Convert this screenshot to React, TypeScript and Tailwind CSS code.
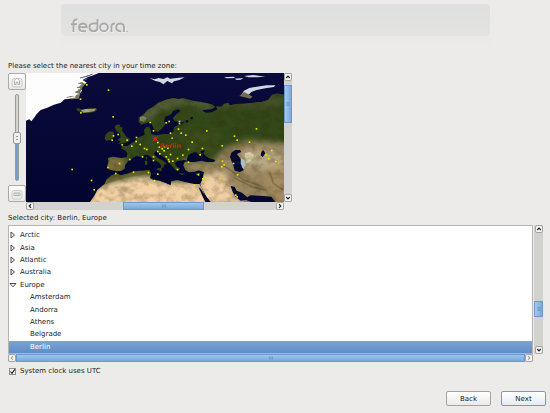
import { useState } from 'react';

const regions = ['Arctic', 'Asia', 'Atlantic', 'Australia'];
const cities = ['Amsterdam', 'Andorra', 'Athens', 'Belgrade', 'Berlin'];

// city markers on the map, in map units
const markers = [
    [-10, -16], [-29, 27], [-28, 68], [69, 80], [55, 0], [180, 97], [190, 122], [228, 98],
    [237, 94], [268, 94], [268, 100], [265, 117], [273, 129], [287, 135], [241, 129], [350, 122],
    [433, 138], [441, 150], [499, 116], [478, 156], [396, 167], [306, 156], [84, 133], [70, 137],
    [66, 150], [111, 150], [125, 168], [139, 142], [138, 154], [150, 163], [163, 175], [170, 178],
    [96, 164], [203, 157], [208, 171], [216, 176], [222, 182], [233, 174], [203, 184], [209, 191],
    [190, 200], [190, 211], [157, 200], [119, 208], [88, 220], [53, 232], [77, 250], [130, 246],
    [175, 247], [203, 252], [228, 200], [235, 208], [237, 214], [248, 213], [241, 193], [262, 205],
    [262, 238], [278, 195], [295, 178], [295, 216], [337, 175], [330, 194], [397, 213], [402, 224],
    [430, 220], [395, 230], [442, 254], [478, 198], [528, 194], [536, 206], [557, 214], [325, 254],
    [338, 266], [340, 275], [313, 285], [345, 262], [390, 265], [437, 315], [441, 320], [4, 271],
    [12, 299], [-54, 238], [225, 170], [545, 181], [193, 271],
];

const mainland =
    'M146 82 160 74 172 60 190 50 205 38 228 29 250 24 264 27 280 25 300 30 312 33 335 36 352 40 368 44 376 51 364 58 344 59 336 62 348 68 366 67 382 58 378 49 394 50 402 42 414 38 420 46 440 42 462 41 490 38 515 36 534 30 546 14 562 10 582 14 V336 H356 L345 312 334 290 331 282 338 266 342 246 326 241 312 246 298 247 286 240 280 226 284 216 300 213 282 210 264 213 254 219 262 232 270 236 264 243 256 240 246 228 236 217 228 206 214 196 204 186 196 184 192 192 204 204 220 212 232 224 224 222 220 232 212 236 214 226 204 216 188 206 176 196 166 194 152 200 140 198 128 204 116 212 106 224 104 236 94 242 82 244 72 242 56 238 52 228 56 214 54 204 68 200 94 204 110 202 112 190 104 180 94 176 96 168 112 168 124 160 134 154 142 144 156 138 164 134 162 120 168 112 178 110 182 120 184 132 200 136 222 132 240 132 250 126 252 112 266 104 284 98 272 96 254 94 248 84 260 72 272 62 264 58 250 62 242 74 226 80 222 92 226 104 214 118 202 126 194 122 186 104 180 94 168 100 154 104 146 96 Z';
const africa =
    'M0 336 L14 316 22 300 34 290 44 282 50 268 64 256 76 251 94 256 110 252 136 243 160 242 178 240 184 250 180 264 190 270 208 272 228 280 242 286 244 274 262 270 284 276 312 282 328 282 334 292 342 310 352 336 Z';
const islands = [
    'M74 110 80 104 92 104 88 112 98 112 96 122 104 132 110 142 120 146 118 154 102 160 84 162 92 154 82 150 92 142 90 130 80 124 76 118Z',
    'M48 132 58 124 72 126 72 140 64 150 48 152 44 146Z',
    'M-42 56 -32 54 -28 60 -16 58 0 54 18 54 22 60 12 66 -6 70 -24 68 -38 62Z',
    'M202 234 216 234 214 244 202 240Z',
    'M164 212 172 212 172 224 166 226Z',
    'M167 201 171 200 171 209 168 208Z',
    'M266 250 284 251 276 255Z',
    'M316 252 330 248 324 256Z',
];
const waters = [
    'M292 204 296 194 308 188 318 186 326 194 340 190 344 196 356 204 376 210 372 216 350 216 334 212 314 216 298 216 290 212Z',
    'M332 184 344 180 342 188 334 190Z',
    'M424 188 436 180 450 180 454 186 440 192 452 206 460 214 462 226 454 230 462 240 450 246 434 242 430 226 424 212 420 200Z',
    'M514 186 520 180 526 190 518 202 512 196Z',
    'M422 288 434 290 440 302 456 308 472 322 482 316 520 318 544 320 556 336 484 336 468 330 452 332 438 322 428 306Z',
    'M326 292 332 296 346 316 362 336 346 336 336 316Z',
    'M286 92 294 90 296 95 288 98Z',
    'M302 82 308 80 308 88 302 88Z',
];
const greenland =
    'M-192 -51 H26 L10 -44 -4 -40 -12 -36 -22 -30 -10 -22 -20 -14 -30 -8 -24 2 -32 12 -36 22 -58 26 -76 28 -88 38 -108 44 -130 54 -148 60 -160 72 -168 84 -176 94 -182 88 -192 92 Z';
const ice = [
    'M178 -36 194 -32 206 -36 220 -33 232 -38 240 -34 260 -36 284 -38 268 -30 252 -26 246 -20 232 -27 220 -17 210 -24 196 -27Z',
    'M402 -38 430 -40 436 -36 410 -35Z',
    'M434 -34 460 -36 452 -31 440 -30Z',
    'M462 -42 490 -45 510 -42 526 -40 500 -38 476 -38Z',
    'M454 14 462 2 478 -6 500 -10 530 -14 556 -14 552 -9 526 -5 500 0 484 6 474 16 460 18Z',
];

function WorldMap(){
    return (
        <svg viewBox="-192 -51 774 387" preserveAspectRatio="none" className="block w-full h-full" role="img" aria-label="Time zone map">
            <defs>
                <filter id="soft" x="-50%" y="-50%" width="200%" height="200%" colorInterpolationFilters="sRGB">
                    <feGaussianBlur stdDeviation="10"/>
                </filter>
                <filter id="terrain" x="0" y="0" width="100%" height="100%" colorInterpolationFilters="sRGB">
                    <feTurbulence type="fractalNoise" baseFrequency="0.035 0.045" numOctaves="4" seed="7"/>
                    <feColorMatrix values="0 0 0 0 0.2  0 0 0 0 0.15  0 0 0 0 0.03  2.6 0 0 0 -1.1"/>
                </filter>
                <linearGradient id="sea" x1="0" y1="0" x2="0" y2="1">
                    <stop offset="0" stopColor="#0a0a3c"/>
                    <stop offset="1" stopColor="#02052f"/>
                </linearGradient>
                <clipPath id="land">
                    <path d={mainland}/>
                    <path d={africa}/>
                    {islands.map((d) => <path key={d} d={d}/>)}
                </clipPath>
            </defs>
            <rect x="-192" y="-51" width="774" height="387" fill="url(#sea)"/>
            <g clipPath="url(#land)">
                <rect x="-60" y="0" width="642" height="336" fill="#324818"/>
                <g filter="url(#soft)">
                    <path d="M150 80 200 36 260 20 380 45 350 60 280 40 210 60 170 96Z" fill="#5c6440"/>
                    <path d="M270 120 H400 L370 200 300 190Z" fill="#3b4d1b"/>
                    <path d="M382 20 H582 V50 H382Z" fill="#47512b"/>
                    <path d="M400 178 470 152 600 160 V350 H400 L330 250 270 244 280 210 370 215Z" fill="#998760"/>
                    <path d="M450 190 520 175 590 195 580 240 470 240Z" fill="#b8a882"/>
                    <path d="M40 200 H105 V250 H50Z" fill="#857446"/>
                    <path d="M320 260 400 245 425 300 470 345 H340Z" fill="#f0cfa4"/>
                    <path d="M-20 360 20 284 160 256 240 276 340 276 360 360Z" fill="#f3d2a6"/>
                    <path d="M520 240 600 225 600 350 560 340Z" fill="#a58c60"/>
                </g>
                <path d="M36 286 60 262 80 248 140 240 180 240 172 252 110 262 60 278Z" fill="#6a5f30" opacity=".65"/>
                <path d="M150 82 160 78 170 84 162 96 150 92Z" fill="#8d917a"/>
                <path d="M-30 58 18 56 12 64 -20 68Z" fill="#a6a38d"/>
                <path d="M430 262 450 272 490 292 530 300M400 226 430 246 460 270 520 290M540 250 550 280 580 300" fill="none" stroke="#5e5030" strokeWidth="5" opacity=".45"/>
                <path d="M464 190 480 186 492 196 482 214 468 220Z" fill="#d3cbb4"/>
                <rect x="-60" y="0" width="642" height="336" filter="url(#terrain)" opacity=".28"/>
            </g>
            {waters.map((d) => <path key={d} d={d} fill="#05092f"/>)}
            <path d="M452 204 464 210 466 226 460 236 452 222Z" fill="#a9c2c0"/>
            <path d={greenland} fill="#fdfdfd"/>
            <path d="M-72 22 -58 18 -46 20 -38 12 -46 6 -34 0 -40 -8 -28 -12 -36 -20 -24 -24 -14 -18 -22 -10 -28 4 -30 16 -34 26 -56 28Z" fill="#77785f"/>
            <path d="M-66 24 -44 21M-52 10 -34 12M-50 -4 -30 -4M-46 -18 -26 -16" stroke="#fff" strokeWidth="3"/>
            <path d="M-30 -36 -6 -42 8 -48M-20 -28 -8 -34" stroke="#596382" strokeWidth="3"/>
            {ice.map((d) => <path key={d} d={d} fill="#cfd8e4"/>)}
            <path d="M448 18 462 6 474 12 488 20 480 26 464 22Z" fill="#736b4c"/>
            {markers.map(([x, y]) => (
                <rect key={`${x},${y}`} x={x - 2} y={y - 2} width="5" height="5" fill="#e8e800"/>
            ))}
            <rect x="244" y="142" width="5" height="5" fill="#f5a27a"/>
            <circle cx="196" cy="146" r="6" fill="#e01b06"/>
            <path d="M188 138 204 154M204 138 188 154" stroke="#e01b06" strokeWidth="3"/>
            <text x="209" y="174" fontSize="19" fontWeight="bold" fill="#d81c08" fontFamily="DejaVu Sans, sans-serif">Berlin</text>
        </svg>
    )
}

const rotations = { up: '', down: 'rotate-180', left: '-rotate-90', right: 'rotate-90' };

function Stepper({ dir, faded }: { dir: keyof typeof rotations; faded?: boolean }){
    return (
        <button aria-label={`Scroll ${dir}`} className="shrink-0 w-2 h-2 grid place-items-center rounded-xs border border-[#a3a39f] bg-[#f6f6f4]">
            <svg viewBox="0 0 6 6" className={`w-1.5 h-1.5 ${rotations[dir]}`}>
                <path d="M1.2 4 3 2.2 4.8 4" fill="none" stroke={faded ? '#a8a8a8' : '#222'} strokeWidth="1.2"/>
            </svg>
        </button>
    )
}

function Grip({ vertical }: { vertical?: boolean }){
    return (
        <svg viewBox="0 0 5 5" className={vertical ? 'w-1 h-1 rotate-90' : 'w-1 h-1'}>
            <path d="M.5 .5v4M2.5 .5v4M4.5 .5v4" stroke="#5f86b8" strokeWidth=".8"/>
        </svg>
    )
}

function ZoomButton({ label, out }: { label: string; out?: boolean }){
    return (
        <button aria-label={label} className="w-full h-[17px] grid place-items-center rounded-xs border border-[#aaa9a5] bg-linear-to-b from-white to-[#e8e8e5]">
            <svg viewBox="0 0 12 12" className="w-3 h-3">
                <rect x="1" y="2.5" width="10" height="8.5" rx="2" fill="#ededeb" stroke="#c4c3c0" strokeWidth=".8"/>
                {out
                    ? <path d="M3 5h6v2.6H3zM5 5v2.6M7 5v2.6" fill="#fff" stroke="#999" strokeWidth=".7"/>
                    : <path d="M3.5 8.500V4.800L6 2.200 8.500 4.800v3.700H7V6H5v2.500z" fill="#fff" stroke="#999" strokeWidth=".7"/>}
            </svg>
        </button>
    )
}

// outline of the header logo, drawn twice for the engraved look
function LogoStrokes(){
    return (
        <>
            <path d="M8.500 15.500H7.500Q4.500 15.500 4.500 18.800V28M2 20.200H8"/>
            <path d="M10.500 23.300H17.800Q17.600 19.700 14 19.500 10.200 19.700 10 23.500 10.200 27.200 14.200 27.200H17"/>
            <path d="M28.500 15V23.400Q28.300 27.200 24.500 27.200 20.600 27 20.500 23.400 20.600 19.700 24.500 19.500H28"/>
            <circle cx="35" cy="23.400" r="3.900"/>
            <path d="M42.500 28V22.500Q42.500 19.500 46 19.500"/>
            <path d="M55 28V23.400Q54.800 19.700 51.200 19.500 47.300 19.700 47.200 23.400 47.300 27 51.200 27.200H52.300"/>
            <path d="M57.500 27.700H59" strokeWidth="1"/>
        </>
    )
}

export default function App(){
    const [utc, setUtc] = useState(true);

    return (
        <main className="min-h-screen flex flex-col bg-[#ecebe9] font-['DejaVu_Sans',sans-serif] text-[7px] leading-[10px] text-[#1c1c1c]">
            <header className="h-15 pt-1 pl-[61px] pr-15">
                <div className="h-8 pl-2 rounded-sm bg-linear-to-b from-[#e0dfdf] to-[#e2e3e2]">
                    <svg viewBox="0 0 64 32" className="w-16 h-8" fill="none" role="img" aria-label="fedora">
                        <g stroke="#f3f3f3" strokeWidth="2.4" transform="translate(.4 .6)"><LogoStrokes/></g>
                        <g stroke="#a9a9a9" strokeWidth="1.900"><LogoStrokes/></g>
                    </svg>
                </div>
                <div className="h-4 bg-linear-to-b from-[#e9e9e7] to-[#ecebe9]"/>
            </header>

            <section className="pl-2 pr-[7px]">
                <p className="h-[13px] pt-px">Please select the nearest city in your time zone:</p>
                <div className="w-[284px] flex">
                    <div className="w-[18px] h-[129px] flex flex-col items-center">
                        <ZoomButton label="Zoom in"/>
                        <div className="relative grow w-full flex justify-center py-1">
                            <div className="w-1 rounded-full border border-[#9b9b9b] bg-linear-to-b from-[#d4d4d1] from-50% to-[#739fd2] to-50%"/>
                            <input
                                type="range"
                                aria-label="Map zoom"
                                defaultValue="50"
                                className="absolute inset-0 w-full h-full appearance-none bg-transparent opacity-0 [writing-mode:vertical-lr]"
                            />
                            <div className="absolute top-1/2 left-1/2 -translate-1/2 w-2 h-3 grid place-items-center rounded-xs border border-[#999] bg-[#f0f0ee] pointer-events-none">
                                <div className="w-[2px] h-1 border-y border-[#999]"/>
                            </div>
                        </div>
                        <ZoomButton label="Zoom out" out/>
                    </div>
                    <div className="grow h-[129px]">
                        <WorldMap/>
                    </div>
                    <div className="w-2 h-[129px] flex flex-col bg-[#d2d2cf]">
                        <Stepper dir="up"/>
                        <div className="h-1 shrink-0"/>
                        <div className="h-[38px] grid place-items-center border border-[#6e98ca] bg-linear-to-r from-[#a5c8ef] to-[#79a9df]"><Grip vertical/></div>
                        <div className="grow"/>
                        <Stepper dir="down"/>
                    </div>
                </div>
                <div className="w-[258px] h-2 ml-[18px] flex bg-[#d2d2cf]">
                    <Stepper dir="left"/>
                    <div className="w-[89px]"/>
                    <div className="w-[81px] grid place-items-center border border-[#6e98ca] bg-linear-to-b from-[#a0c5ed] to-[#79a7da]"><Grip/></div>
                    <div className="grow"/>
                    <Stepper dir="right"/>
                </div>
                <p className="h-[15px] pt-[3px]">Selected city: Berlin, Europe</p>

                <div className="flex gap-px">
                    <div className="grow pt-[3px] border border-[#b5b4b1] bg-white">
                        <ul className="h-31 flex flex-col">
                            {regions.map((region) => (
                                <li key={region} className="flex-1 flex items-center gap-[3px]">
                                    <svg viewBox="0 0 8 8" className="w-2 h-2">
                                        <path d="M2 1 5.500 4 2 7Z" fill="#fff" stroke="#333" strokeWidth=".9"/>
                                    </svg>
                                    {region}
                                </li>
                            ))}
                            <li className="flex-1 flex items-center gap-[3px]">
                                <svg viewBox="0 0 8 8" className="w-2 h-2">
                                    <path d="M1 2.500H7L4 5.800Z" fill="#fff" stroke="#333" strokeWidth=".9"/>
                                </svg>
                                Europe
                            </li>
                            {cities.map((city) => (
                                <li key={city} className="flex-1 pl-[21px] flex items-center last:bg-linear-to-b last:from-[#7da3d8] last:to-[#5f8dc5] last:text-white">{city}</li>
                            ))}
                        </ul>
                    </div>
                    <div className="w-[9px] flex flex-col items-center bg-[#d2d2cf]">
                        <Stepper dir="up"/>
                        <div className="grow"/>
                        <div className="w-full h-4 grid place-items-center border border-[#6e98ca] bg-linear-to-r from-[#a5c8ef] to-[#79a9df]"><Grip vertical/></div>
                        <div className="h-[29px] shrink-0"/>
                        <Stepper dir="down"/>
                    </div>
                </div>
                <div className="mr-[10px] h-2 flex bg-[#d2d2cf]">
                    <Stepper dir="left" faded/>
                    <div className="grow grid place-items-center border border-[#6e98ca] bg-linear-to-b from-[#a0c5ed] to-[#79a7da]"><Grip/></div>
                    <Stepper dir="right" faded/>
                </div>

                <label className="mt-1 pl-px h-[10px] flex items-center gap-1">
                    <input
                        type="checkbox"
                        checked={utc}
                        onChange={(e) => setUtc(e.target.checked)}
                        className="peer appearance-none w-[7px] h-[7px] border border-[#8b8b88] bg-white"
                    />
                    <svg viewBox="0 0 7 7" className="-ml-[11px] w-[7px] h-[7px] invisible peer-checked:visible pointer-events-none">
                        <path d="M1.500 3.500 3 5.300 5.800 1.200" fill="none" stroke="#111" strokeWidth="1.1"/>
                    </svg>
                    System clock uses UTC
                </label>
            </section>

            <footer className="mt-auto pb-[7px] pr-1 flex justify-end gap-[10px]">
                <button className="w-[45px] h-[15px] rounded-xs border border-[#a3a39f] bg-linear-to-b from-white to-[#eaeae8]">Back</button>
                <button className="w-[45px] h-[15px] rounded-xs border border-[#7f97bd] bg-linear-to-b from-white to-[#e6ebf3]">Next</button>
            </footer>
        </main>
    )
}
